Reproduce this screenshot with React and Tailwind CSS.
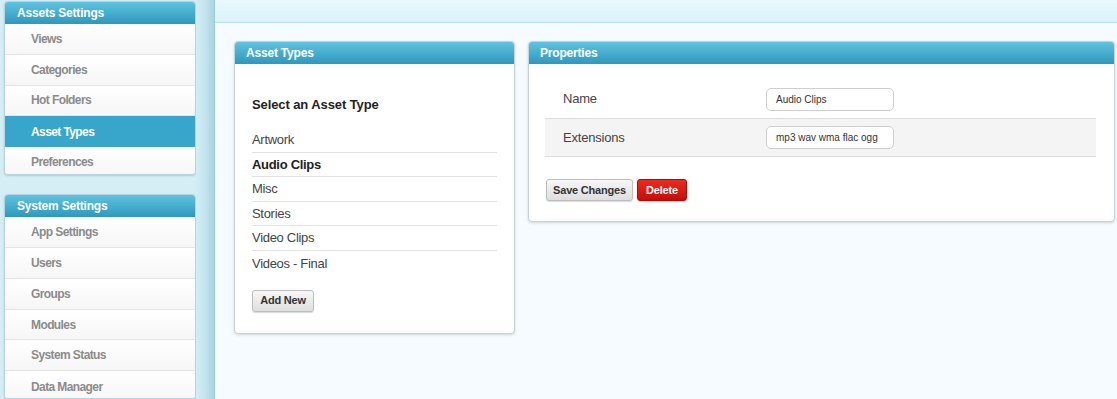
import React from 'react';

const assetMenu = ['Views', 'Categories', 'Hot Folders', 'Asset Types', 'Preferences'];
const systemMenu = ['App Settings', 'Users', 'Groups', 'Modules', 'System Status', 'Data Manager'];
const assetTypes = ['Artwork', 'Audio Clips', 'Misc', 'Stories', 'Video Clips', 'Videos - Final'];

function SideBox({ title, items, active }) {
    return (
        <div className="rounded-[4px] border border-[#b7d3dc] bg-white shadow-[0_1px_2px_rgba(0,0,0,0.15)] overflow-hidden">
            <div className="h-[22px] flex items-center pl-3 bg-gradient-to-b from-[#5fc3e0] to-[#2d98bd] text-white text-[12px] font-bold tracking-[-0.2px]">
                {title}
            </div>
            {items.map((item, i) => (
                <div
                    key={item}
                    className={
                        item === active
                            ? 'h-[30.75px] flex items-center pl-[26px] bg-[#38a6cb] text-white text-[12px] font-bold tracking-[-0.6px]'
                            : 'h-[30.75px] flex items-center pl-[26px] bg-gradient-to-b from-white to-[#f6f6f6] text-[#8b8b8b] text-[12px] font-bold tracking-[-0.6px] ' +
                              (i < items.length - 1 ? 'border-b border-[#e4e4e4]' : '')
                    }
                >
                    {item}
                </div>
            ))}
        </div>
    );
}

function Panel({ title, className, children }) {
    return (
        <div className={'rounded-[4px] border border-[#c9d3d6] bg-white shadow-[0_1px_3px_rgba(0,0,0,0.15)] overflow-hidden ' + className}>
            <div className="h-[22px] flex items-center pl-[11px] bg-gradient-to-b from-[#5fc3e0] to-[#2d98bd] text-white text-[12px] font-bold tracking-[-0.2px]">
                {title}
            </div>
            {children}
        </div>
    );
}

export default function App() {
    return (
        <div className="flex w-[1117px] h-[399px] overflow-hidden font-['Liberation_Sans',Arial,sans-serif]">

            {/* Sidebar */}
            <div className="w-[196px] shrink-0 bg-[#d5eef6] pl-1 pt-px flex flex-col gap-[19px]">
                <SideBox title="Assets Settings" items={assetMenu} active="Asset Types" />
                <SideBox title="System Settings" items={systemMenu} />
            </div>

            {/* Divider bar */}
            <div className="w-[19px] shrink-0 bg-gradient-to-r from-[#d3edf5] via-[#c4e4ee] to-[#a9d4e2] border-r border-[#9ccbdb]"></div>

            {/* Main */}
            <div className="flex-1 bg-[#f5fbfe] flex flex-col">
                <div className="h-[23px] bg-gradient-to-b from-[#e9f8fc] to-[#dbf3f9] border-b border-[#b9e0ec]"></div>

                <div className="flex items-start gap-[13px] pl-[19px] pr-[2px] pt-[18px]">
                    <Panel title="Asset Types" className="w-[281px]">
                        <div className="px-[17px] pt-[32px] pb-[21px]">
                            <div className="h-[18px] leading-[18px] text-[13px] font-bold text-[#222] tracking-[-0.1px]">
                                Select an Asset Type
                            </div>
                            <div className="mt-[14px]">
                                {assetTypes.map((t, i) => (
                                    <div
                                        key={t}
                                        className={
                                            'h-[24.6px] flex items-center text-[13px] tracking-[-0.3px] ' +
                                            (t === 'Audio Clips' ? 'font-bold text-[#222] ' : 'text-[#444] ') +
                                            (i < assetTypes.length - 1 ? 'border-b border-[#e3e3e3]' : '')
                                        }
                                    >
                                        {t}
                                    </div>
                                ))}
                            </div>
                            <button className="mt-[14px] h-[22px] w-[62px] rounded-[3px] border border-[#bdbdbd] bg-gradient-to-b from-[#f7f7f7] to-[#dedede] shadow-[0_1px_1px_rgba(0,0,0,0.15)] text-[11px] font-bold text-[#333] tracking-[-0.2px]">
                                Add New
                            </button>
                        </div>
                    </Panel>

                    <Panel title="Properties" className="flex-1">
                        <div className="pl-[16px] pr-[18px] pt-[16px] pb-[20px]">
                            <div className="flex h-[38px] items-center">
                                <div className="w-[221px] pl-[18px] text-[13px] text-[#444] tracking-[-0.2px]">Name</div>
                                <div className="w-[128px] h-[23px] rounded-[5px] border border-[#cfcfcf] bg-white flex items-center pl-[9px] text-[10px] text-[#333]">
                                    Audio Clips
                                </div>
                            </div>
                            <div className="flex h-[39px] items-center bg-[#f4f4f4] border-y border-[#dedede]">
                                <div className="w-[221px] pl-[18px] text-[13px] text-[#444] tracking-[-0.2px]">Extensions</div>
                                <div className="w-[128px] h-[23px] rounded-[5px] border border-[#cfcfcf] bg-white flex items-center pl-[9px] text-[10px] text-[#333]">
                                    mp3 wav wma flac ogg
                                </div>
                            </div>
                            <div className="mt-[22px] flex gap-[4px] pl-px">
                                <button className="h-[22px] w-[87px] rounded-[3px] border border-[#bdbdbd] bg-gradient-to-b from-[#f7f7f7] to-[#dedede] shadow-[0_1px_1px_rgba(0,0,0,0.15)] text-[11px] font-bold text-[#333] tracking-[-0.2px]">
                                    Save Changes
                                </button>
                                <button className="h-[22px] w-[50px] rounded-[3px] border border-[#a80c06] bg-gradient-to-b from-[#ee2a1e] to-[#c40d07] shadow-[0_1px_1px_rgba(0,0,0,0.2)] text-[11px] font-bold text-white tracking-[-0.2px]">
                                    Delete
                                </button>
                            </div>
                        </div>
                    </Panel>
                </div>
            </div>
        </div>
    );
}
